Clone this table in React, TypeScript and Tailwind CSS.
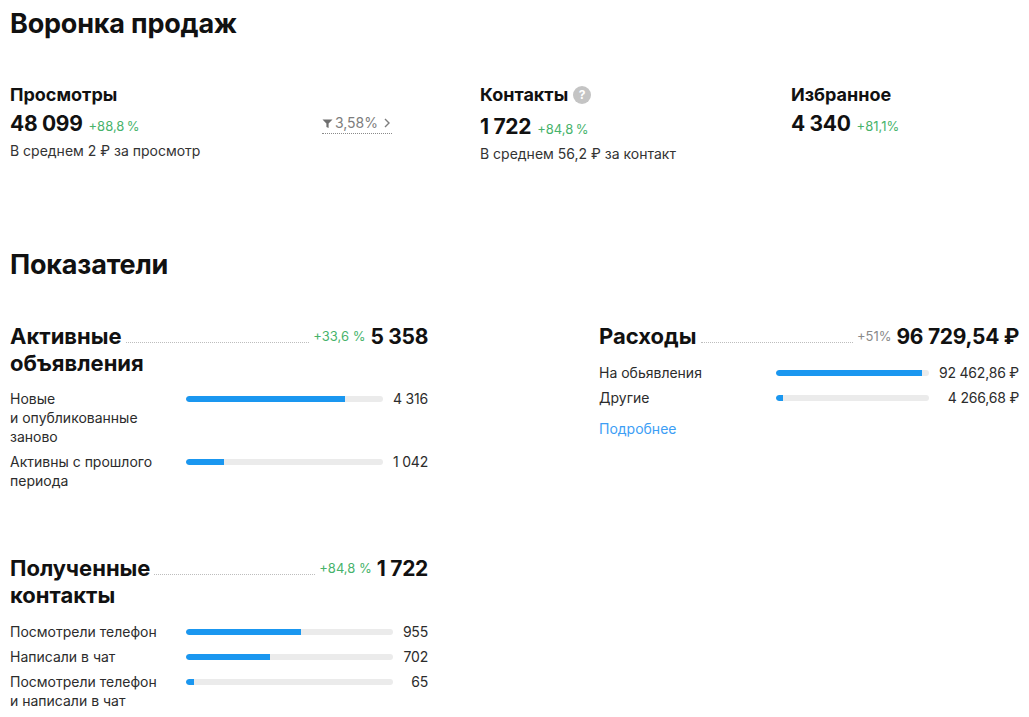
import React from "react";

const font = { fontFamily: "Inter, 'Noto Sans', sans-serif" };

function Bar({ pct }: { pct: number }) {
  return (
    <div className="h-[19px] flex items-center">
      <div className="w-full h-[6px] rounded-full bg-[#ebebeb] overflow-hidden">
        <div className="h-full bg-[#1a97f0] rounded-l-full" style={{ width: `${pct}%` }} />
      </div>
    </div>
  );
}

type Row = { label: React.ReactNode; pct: number; value: string };

function Rows({ rows, labelW }: { rows: Row[]; labelW?: string }) {
  return (
    <div className={`grid ${labelW ?? "grid-cols-[166px_1fr_auto]"} gap-x-[10px] gap-y-[6px] text-[14px] leading-[19px] text-[#2c2c2c]`}>
      {rows.map((r, i) => (
        <React.Fragment key={i}>
          <div>{r.label}</div>
          <Bar pct={r.pct} />
          <div className="text-right whitespace-nowrap tracking-[-0.2px]">{r.value}</div>
        </React.Fragment>
      ))}
    </div>
  );
}

function CardHead({
  first,
  second,
  delta,
  deltaClass,
  value,
}: {
  first: string;
  second?: string;
  delta: string;
  deltaClass: string;
  value: string;
}) {
  return (
    <div className="text-[22px] leading-[27px] font-bold text-[#111]">
      <div className="flex items-end">
        <span className="whitespace-nowrap">{first}</span>
        <span className="flex-1 mx-[4px] mb-[7px] border-b border-dotted border-[#bdbdbd]" />
        <span className={`text-[13px] font-normal leading-[27px] mr-[5px] ${deltaClass}`}>{delta}</span>
        <span className="whitespace-nowrap text-[21px] tracking-[-0.3px]">{value}</span>
      </div>
      {second && <div>{second}</div>}
    </div>
  );
}

function Funnel() {
  return (
    <div className="flex items-center gap-[2px] text-[14px] leading-[18px] text-[#7d7d7d] border-b border-dotted border-[#8a8a8a] pb-[1px]">
      <svg width="11" height="11" viewBox="0 0 11 11">
        <path d="M0.5 1.5 H10.5 L6.6 5.6 V10 L4.4 9 V5.6 Z" fill="#6f6f6f" />
      </svg>
      <span>3,58%</span>
      <svg width="10" height="12" viewBox="0 0 10 12" className="ml-[2px]">
        <path d="M3 2 L7 6 L3 10" stroke="#7d7d7d" strokeWidth="1.4" fill="none" />
      </svg>
    </div>
  );
}

export default function App() {
  return (
    <div className="w-[1029px] h-[717px] bg-white px-[10px] pt-[7px] overflow-hidden" style={font}>
      <h1 className="text-[27px] leading-[34px] font-bold text-[#111] tracking-[-0.2px]">Воронка продаж</h1>

      <div className="flex mt-[42px]">
        <div className="w-[382px]">
          <div className="text-[18px] leading-[24px] font-bold text-[#111]">Просмотры</div>
          <div className="flex items-center justify-between mt-[3px]">
            <div className="flex items-baseline">
              <span className="text-[21px] leading-[28px] font-bold text-[#111] tracking-[-0.3px]">48 099</span>
              <span className="ml-[6px] text-[13px] text-[#47b36b]">+88,8&thinsp;%</span>
            </div>
            <Funnel />
          </div>
          <div className="mt-[3px] text-[14px] leading-[20px] text-[#333]">В среднем 2 ₽ за просмотр</div>
        </div>

        <div className="ml-[88px] w-[311px]">
          <div className="flex items-center h-[24px]">
            <span className="text-[18px] leading-[24px] font-bold text-[#111]">Контакты</span>
            <span className="ml-[5px] w-[18px] h-[18px] rounded-full bg-[#c4c4c4] text-white text-[12px] font-bold flex items-center justify-center">?</span>
          </div>
          <div className="flex items-baseline mt-[6px]">
            <span className="text-[21px] leading-[28px] font-bold text-[#111] tracking-[-0.3px]">1 722</span>
            <span className="ml-[6px] text-[13px] text-[#47b36b]">+84,8&thinsp;%</span>
          </div>
          <div className="mt-[3px] text-[14px] leading-[20px] text-[#333]">В среднем 56,2 ₽ за контакт</div>
        </div>

        <div>
          <div className="text-[18px] leading-[24px] font-bold text-[#111]">Избранное</div>
          <div className="flex items-baseline mt-[3px]">
            <span className="text-[21px] leading-[28px] font-bold text-[#111] tracking-[-0.3px]">4 340</span>
            <span className="ml-[6px] text-[13px] text-[#47b36b]">+81,1%</span>
          </div>
        </div>
      </div>

      <h2 className="mt-[84px] text-[27px] leading-[34px] font-bold text-[#111] tracking-[-0.2px]">Показатели</h2>

      <div className="flex mt-[41px]">
        <div className="w-[418px]">
          <CardHead first="Активные" second="объявления" delta="+33,6 %" deltaClass="text-[#47b36b]" value="5 358" />
          <div className="mt-[12px]">
            <Rows
              rows={[
                { label: <>Новые<br />и опубликованные<br />заново</>, pct: 80.55, value: "4 316" },
                { label: <>Активны с прошлого<br />периода</>, pct: 19.45, value: "1 042" },
              ]}
            />
          </div>

          <div className="mt-[65px]">
            <CardHead first="Полученные" second="контакты" delta="+84,8 %" deltaClass="text-[#47b36b]" value="1 722" />
            <div className="mt-[13px]">
              <Rows
                rows={[
                  { label: "Посмотрели телефон", pct: 55.46, value: "955" },
                  { label: "Написали в чат", pct: 40.77, value: "702" },
                  { label: <>Посмотрели телефон<br />и написали в чат</>, pct: 3.77, value: "65" },
                ]}
              />
            </div>
          </div>
        </div>

        <div className="w-[420px] ml-auto">
          <CardHead first="Расходы" delta="+51%" deltaClass="text-[#8a8a8a]" value="96 729,54 ₽" />
          <div className="mt-[13px]">
            <Rows
              labelW="grid-cols-[167px_1fr_auto]"
              rows={[
                { label: "На обьявления", pct: 95.59, value: "92 462,86 ₽" },
                { label: "Другие", pct: 4.41, value: "4 266,68 ₽" },
              ]}
            />
          </div>
          <div className="mt-[12px] text-[14px] leading-[19px] text-[#3d9ef5]">Подробнее</div>
        </div>
      </div>
    </div>
  );
}
